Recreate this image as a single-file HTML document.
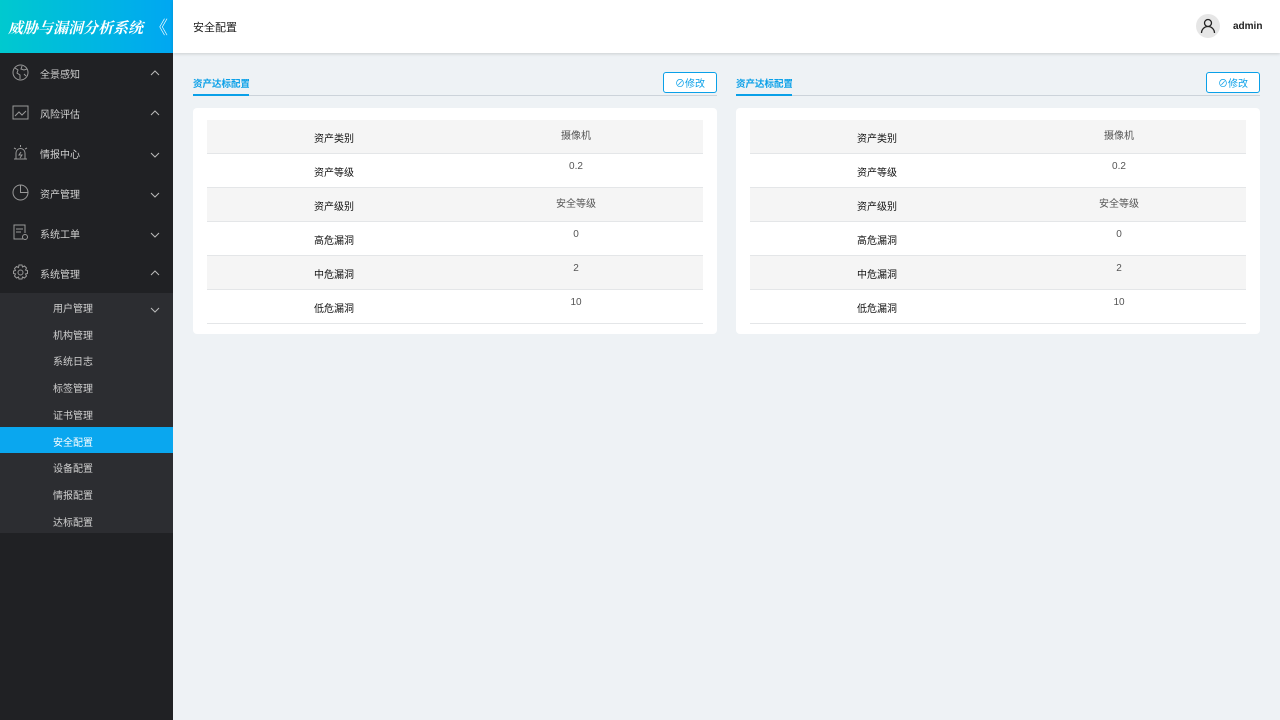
<!DOCTYPE html><html><head><meta charset="utf-8"><style>
*{margin:0;padding:0;box-sizing:border-box}
body{width:1280px;height:720px;overflow:hidden;font-family:"Liberation Sans","Noto Sans CJK SC",sans-serif;font-size:10px;background:#eef2f5;position:relative}
.side{position:absolute;left:0;top:0;width:173px;height:720px;background:#202124}
.logo{height:53px;background:linear-gradient(90deg,#00c9cf,#00a7f2);color:#fff;font-family:"Noto Serif CJK SC",serif;font-size:15px;font-weight:bold;padding:17px 0 0 8px;font-style:italic;position:relative}
.logo span{position:absolute;left:150px;top:14px;font-size:18px;font-style:normal;font-weight:normal}
.mi{position:absolute;left:0;width:173px;height:40px;color:#d0d0d0;font-size:10px}
.mi .t{position:absolute;left:40px;top:13px}
.mi svg.ic{position:absolute;left:12px;top:11px}
.mi svg.ar{position:absolute;left:150px;top:17px}
.sub{position:absolute;left:0;top:293px;width:173px;height:240px;background:#2c2d31}
.si{position:absolute;left:0;width:173px;height:26px;color:#cfcfcf;padding:7px 0 0 53px}
.si.on{background:#0aa7ef;color:#fff}
.hdr{position:absolute;left:173px;top:0;width:1107px;height:53px;background:#fff;box-shadow:0 1px 3px rgba(0,0,0,.15)}
.hdr .tt{position:absolute;left:20px;top:19px;font-size:11px;color:#222}
.av{position:absolute;left:1023px;top:14px;width:24px;height:24px;border-radius:50%;background:#e6e6e6}
.hdr .u{position:absolute;left:1060px;top:21px;font-size:10px;color:#222;font-weight:bold}
.pn{position:absolute;top:70px;width:524px}
.ph{height:26px;border-bottom:1px solid #ccd3da;position:relative}
.ph .ti{position:absolute;left:0;top:6px;color:#0aa0e8;font-size:9.5px;height:20px;border-bottom:2px solid #0aa0e8;width:56px;white-space:nowrap;overflow:hidden;font-weight:bold}
.btn{position:absolute;right:0;top:2px;width:54px;height:21px;border:1px solid #0aa0e8;border-radius:3px;color:#0aa0e8;background:#fff;font-size:10px;padding:2px 0 0 11px;white-space:nowrap}
.card{margin-top:12px;background:#fff;border-radius:4px;height:226px;padding:12px 14px}
.row{height:34px;border-bottom:1px solid #e4e6e8;position:relative;color:#111}
.row.g{background:#f5f5f5}
.row .k{position:absolute;left:107px;top:10px}
.row .v{position:absolute;left:0;width:738px;text-align:center;top:7px;color:#555}
</style></head><body>
<div class="side">
<div class="logo">威胁与漏洞分析系统<span>《</span></div>
<div class="mi" style="top:53px"><svg class="ic" width="17" height="17" viewBox="0 0 17 17" fill="none" stroke="#999" stroke-width="1"><circle cx="8.5" cy="8.5" r="7.5"/><path d="M3 4l3 2-1 3 3 2v4M10 2l-1 3 3 1 3-1M12 10l2 2"/></svg><span class="t">全景感知</span><svg class="ar" width="10" height="6" viewBox="0 0 10 6" fill="none" stroke="#bbb"><path d="M1 5l4-4 4 4"/></svg></div>
<div class="mi" style="top:93px"><svg class="ic" width="17" height="17" viewBox="0 0 17 17" fill="none" stroke="#999"><rect x="1" y="2" width="15" height="13"/><path d="M3 12l4-4 3 3 4-4"/></svg><span class="t">风险评估</span><svg class="ar" width="10" height="6" viewBox="0 0 10 6" fill="none" stroke="#bbb"><path d="M1 5l4-4 4 4"/></svg></div>
<div class="mi" style="top:133px"><svg class="ic" width="17" height="17" viewBox="0 0 17 17" fill="none" stroke="#999"><path d="M4 15V9a4.5 4.5 0 019 0v6M2 15h13M8.5 1v2M2 4l2 1M15 4l-2 1M9 8l-2 3h3l-2 3"/></svg><span class="t">情报中心</span><svg class="ar" style="top:19px" width="10" height="6" viewBox="0 0 10 6" fill="none" stroke="#bbb"><path d="M1 1l4 4 4-4"/></svg></div>
<div class="mi" style="top:173px"><svg class="ic" width="17" height="17" viewBox="0 0 17 17" fill="none" stroke="#999"><circle cx="8.5" cy="8.5" r="7.5"/><path d="M8.5 1v7.5H16"/></svg><span class="t">资产管理</span><svg class="ar" style="top:19px" width="10" height="6" viewBox="0 0 10 6" fill="none" stroke="#bbb"><path d="M1 1l4 4 4-4"/></svg></div>
<div class="mi" style="top:213px"><svg class="ic" width="17" height="17" viewBox="0 0 17 17" fill="none" stroke="#999"><path d="M11 15H2V1h11v8M4 5h7M4 8h5"/><circle cx="13" cy="13" r="2.5"/></svg><span class="t">系统工单</span><svg class="ar" style="top:19px" width="10" height="6" viewBox="0 0 10 6" fill="none" stroke="#bbb"><path d="M1 1l4 4 4-4"/></svg></div>
<div class="mi" style="top:253px"><svg class="ic" width="17" height="17" viewBox="0 0 17 17" fill="none" stroke="#999"><circle cx="8.5" cy="8.5" r="2.5"/><path d="M7 1h3l.5 2 2-1 2 2-1 2 2 .5v3l-2 .5 1 2-2 2-2-1-.5 2H7l-.5-2-2 1-2-2 1-2-2-.5V7l2-.5-1-2 2-2 2 1z"/></svg><span class="t">系统管理</span><svg class="ar" width="10" height="6" viewBox="0 0 10 6" fill="none" stroke="#bbb"><path d="M1 5l4-4 4 4"/></svg></div>
<div class="sub">
<div class="si" style="top:0">用户管理<svg style="position:absolute;left:150px;top:14px" width="10" height="6" viewBox="0 0 10 6" fill="none" stroke="#bbb"><path d="M1 1l4 4 4-4"/></svg></div>
<div class="si" style="top:27px">机构管理</div>
<div class="si" style="top:53px">系统日志</div>
<div class="si" style="top:80px">标签管理</div>
<div class="si" style="top:107px">证书管理</div>
<div class="si on" style="top:134px">安全配置</div>
<div class="si" style="top:160px">设备配置</div>
<div class="si" style="top:187px">情报配置</div>
<div class="si" style="top:214px">达标配置</div>
</div></div>
<div class="hdr"><span class="tt">安全配置</span><div class="av"><svg width="24" height="24" viewBox="0 0 24 24" fill="none" stroke="#222" stroke-width="1.3"><circle cx="12" cy="9" r="3.5"/><path d="M5.5 19a6.5 6.5 0 0113 0"/></svg></div><span class="u">admin</span></div>
<div class="pn" style="left:193px">
<div class="ph"><span class="ti">资产达标配置</span><span class="btn">⊘修改</span></div>
<div class="card">
<div class="row g"><span class="k">资产类别</span><span class="v">摄像机</span></div>
<div class="row"><span class="k">资产等级</span><span class="v">0.2</span></div>
<div class="row g"><span class="k">资产级别</span><span class="v">安全等级</span></div>
<div class="row"><span class="k">高危漏洞</span><span class="v">0</span></div>
<div class="row g"><span class="k">中危漏洞</span><span class="v">2</span></div>
<div class="row"><span class="k">低危漏洞</span><span class="v">10</span></div>
</div></div>
<div class="pn" style="left:736px">
<div class="ph"><span class="ti">资产达标配置</span><span class="btn">⊘修改</span></div>
<div class="card">
<div class="row g"><span class="k">资产类别</span><span class="v">摄像机</span></div>
<div class="row"><span class="k">资产等级</span><span class="v">0.2</span></div>
<div class="row g"><span class="k">资产级别</span><span class="v">安全等级</span></div>
<div class="row"><span class="k">高危漏洞</span><span class="v">0</span></div>
<div class="row g"><span class="k">中危漏洞</span><span class="v">2</span></div>
<div class="row"><span class="k">低危漏洞</span><span class="v">10</span></div>
</div></div>
</body></html>
